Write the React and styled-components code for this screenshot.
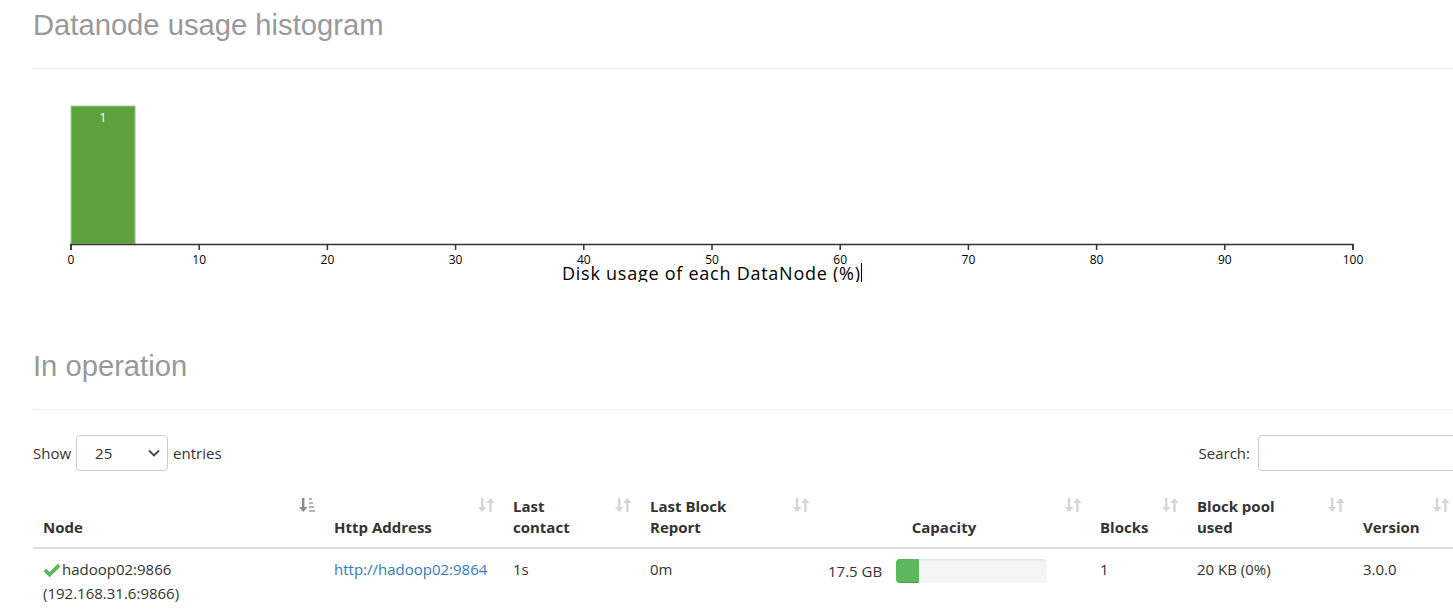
import React from 'react'
import styled, { createGlobalStyle } from 'styled-components'

const GlobalStyle = createGlobalStyle`
    html, body {
        margin: 0;
        padding: 0;
        background: #fff;
        overflow: hidden;
    }
    body {
        font-family: "Open Sans", "Liberation Sans", sans-serif;
        font-size: 15px;
        line-height: 21px;
        color: #333;
    }
`

const Page = styled.div`
    width: 1425px;
    padding-left: 33px;
`

const PageHeader = styled.div`
    margin-top: ${p => p.$top}px;
    padding-bottom: 27px;
    border-bottom: 1px solid #eee;
`

const Title = styled.h1`
    margin: 0;
    font-family: "Liberation Sans", Arial, sans-serif;
    font-weight: 400;
    font-size: 29.2px;
    line-height: 32px;
    color: #999;
`

const Chart = styled.svg`
    display: block;
    width: 1400px;
    height: 213px;
    overflow: hidden;
`

const Controls = styled.div`
    margin-top: 25px;
    display: flex;
    justify-content: space-between;
    align-items: center;
    height: 36px;
`

const Field = styled.label`
    display: flex;
    align-items: center;
    gap: ${p => p.$gap || 6}px;
`

const SelectBox = styled.div`
    position: relative;
    box-sizing: border-box;
    width: 92px;
    height: 36px;
    border: 1px solid #ccc;
    border-radius: 4px;
    padding-left: 18px;
    display: flex;
    align-items: center;
    color: #333;

    svg {
        position: absolute;
        right: 7px;
        top: 12px;
    }
`

const SearchInput = styled.div`
    box-sizing: border-box;
    width: 200px;
    height: 36px;
    border: 1px solid #ccc;
    border-radius: 4px;
`

const Table = styled.table`
    margin-top: 20px;
    width: 1425px;
    border-collapse: collapse;
    table-layout: fixed;
`

const Th = styled.th`
    position: relative;
    box-sizing: border-box;
    width: ${p => p.$w}px;
    padding: 5px 30px 9px 10px;
    vertical-align: bottom;
    text-align: ${p => (p.$center ? 'center' : 'left')};
    font-weight: 700;
    border-bottom: 2px solid #ddd;
`

const SortIcon = styled.svg`
    position: absolute;
    top: 6px;
    right: 8px;
    width: 17px;
    height: 16px;
`

const Td = styled.td`
    box-sizing: border-box;
    padding: 10px 10px 8px;
    vertical-align: top;
`

const NodeName = styled.span`
    display: inline-flex;
    align-items: center;
    gap: 1px;
`

const Link = styled.a`
    color: #337ab7;
    text-decoration: none;
`

const CapacityCell = styled.div`
    display: flex;
    align-items: center;
    gap: 14px;
`

const CapacityLabel = styled.span`
    width: 54px;
    text-align: right;
    white-space: nowrap;
`

const Progress = styled.div`
    width: 150px;
    height: 24px;
    border-radius: 4px;
    background: #f5f5f5;
    box-shadow: inset 0 1px 2px rgba(0, 0, 0, 0.1);
    overflow: hidden;
`

const ProgressBar = styled.div`
    height: 100%;
    background: #5cb85c;
    box-shadow: inset 0 -1px 0 rgba(0, 0, 0, 0.15);
`

const X0 = 38
const X_SCALE = 12.82
const ticks = [0, 10, 20, 30, 40, 50, 60, 70, 80, 90, 100]

const Histogram = () => (
    <Chart>
        <rect x={X0} y={37} width={5 * X_SCALE} height={138} fill="#5da13c" stroke="#a9cf94" strokeWidth="1" />
        <text x={X0 + 2.5 * X_SCALE} y={53} fill="#fff" fontSize="12" textAnchor="middle" fontFamily="Open Sans, sans-serif">1</text>
        <path d={`M${X0},181V175.5H${X0 + 100 * X_SCALE}V181`} fill="none" stroke="#333" strokeWidth="1.5" />
        {ticks.map(t => (
            <g key={t} transform={`translate(${X0 + t * X_SCALE},175)`}>
                <line y2="6" stroke="#333" strokeWidth="1.5" />
                <text y="20" fontSize="12" textAnchor="middle" fill="#000" fontFamily="Open Sans, sans-serif">{t}</text>
            </g>
        ))}
        <text x={529} y={211} fontSize="18" fill="#000" fontFamily="Open Sans, sans-serif" textLength="298">
            Disk usage of each DataNode (%)
        </text>
        <line x1="828.5" y1="194" x2="828.5" y2="213" stroke="#000" strokeWidth="1" />
    </Chart>
)

const Sort = ({ active }) => (
    <SortIcon viewBox="0 0 17 16">
        <path d="M3 1h2.4v9H8.4L4.2 15 0 10h3z" fill={active ? '#8a8a8a' : '#d6d6d6'} />
        {active ? (
            <g fill="#b5b5b5">
                <rect x="10" y="1" width="3" height="2" />
                <rect x="10" y="5" width="4" height="2" />
                <rect x="10" y="9" width="5" height="2" />
                <rect x="10" y="13" width="6" height="2" />
            </g>
        ) : (
            <path d="M13.6 15h-2.4V6H8.2L12.4 1l4.2 5h-3z" fill="#d6d6d6" />
        )}
    </SortIcon>
)

const columns = [
    { w: 291, label: 'Node', active: true },
    { w: 179, label: 'Http Address' },
    { w: 137, label: <>Last<br />contact</> },
    { w: 178, label: <>Last Block<br />Report</> },
    { w: 272, label: 'Capacity', center: true },
    { w: 97, label: 'Blocks' },
    { w: 166, label: <>Block pool<br />used</> },
    { w: 105, label: 'Version' },
]

const Check = () => (
    <svg width="18" height="16" viewBox="0 0 18 16">
        <path d="M0.5 9.2L3.2 6.5 6.6 9.9 14.8 1.7 17.5 4.4 6.6 15.3z" fill="#5cb85c" />
    </svg>
)

const App = () => {
    const used = 15.3
    return (
        <>
            <GlobalStyle />
            <Page>
                <PageHeader $top={9}>
                    <Title>Datanode usage histogram</Title>
                </PageHeader>
                <Histogram />
                <PageHeader $top={68}>
                    <Title>In operation</Title>
                </PageHeader>
                <Controls>
                    <Field $gap={5}>
                        Show
                        <SelectBox>
                            25
                            <svg width="12" height="10" viewBox="0 0 12 10">
                                <path d="M1 2.5l5 5 5-5" fill="none" stroke="#444" strokeWidth="1.8" />
                            </svg>
                        </SelectBox>
                        entries
                    </Field>
                    <Field $gap={8}>
                        Search:
                        <SearchInput />
                    </Field>
                </Controls>
                <Table>
                    <thead>
                        <tr>
                            {columns.map((c, i) => (
                                <Th key={i} $w={c.w} $center={c.center}>
                                    {c.label}
                                    <Sort active={c.active} />
                                </Th>
                            ))}
                        </tr>
                    </thead>
                    <tbody>
                        <tr>
                            <Td>
                                <NodeName><Check />hadoop02:9866</NodeName>
                                <br />
                                (192.168.31.6:9866)
                            </Td>
                            <Td><Link href="#">http://hadoop02:9864</Link></Td>
                            <Td>1s</Td>
                            <Td>0m</Td>
                            <Td>
                                <CapacityCell>
                                    <CapacityLabel>17.5 GB</CapacityLabel>
                                    <Progress>
                                        <ProgressBar style={{ width: `${used}%` }} />
                                    </Progress>
                                </CapacityCell>
                            </Td>
                            <Td>1</Td>
                            <Td>20 KB (0%)</Td>
                            <Td>3.0.0</Td>
                        </tr>
                    </tbody>
                </Table>
            </Page>
        </>
    )
}

export default App
